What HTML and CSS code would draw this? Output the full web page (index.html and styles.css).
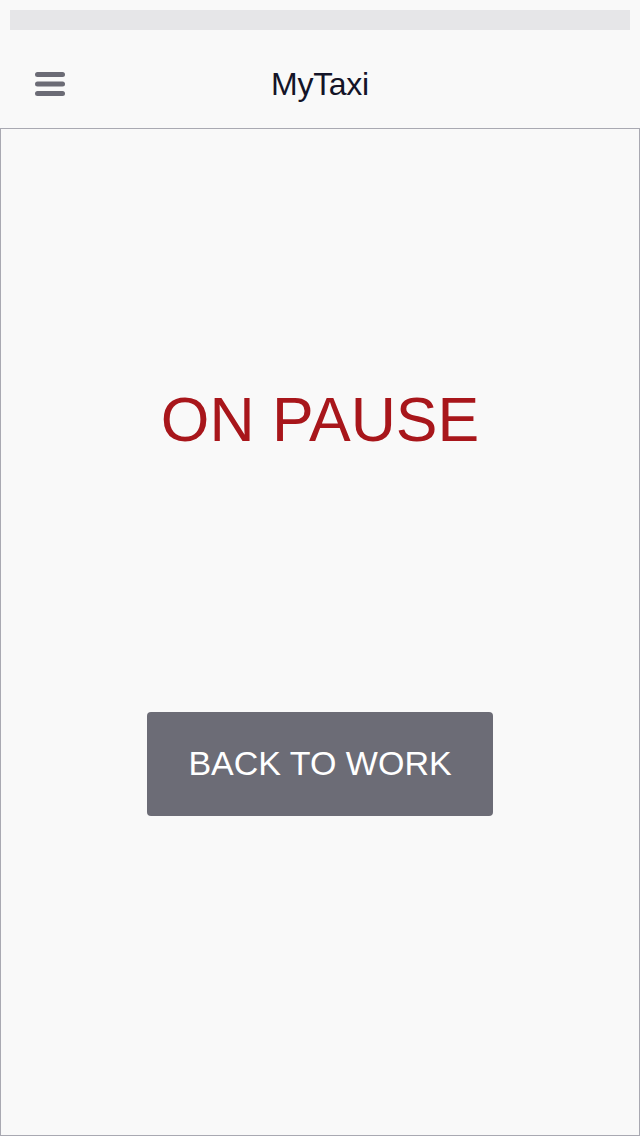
FILE: index.html
```html
<!DOCTYPE html>
<html>
<head>
<meta charset="utf-8">
<link rel="stylesheet" href="styles.css">
</head>
<body>
<div class="status"></div>
<header class="header">
  <button class="menu" aria-label="Menu">
    <svg width="30" height="24" viewBox="0 0 30 24">
      <rect x="0" y="0" width="30" height="5" rx="2.5" fill="#6b6b75"/>
      <rect x="0" y="9.5" width="30" height="5" rx="2.5" fill="#6b6b75"/>
      <rect x="0" y="19" width="30" height="5" rx="2.5" fill="#6b6b75"/>
    </svg>
  </button>
  <h1 class="title">MyTaxi</h1>
</header>
<main class="content">
  <div class="state">ON PAUSE</div>
  <button class="action">BACK TO WORK</button>
</main>
</body>
</html>
```
FILE: styles.css
```css
html, body {
  margin: 0;
  padding: 0;
  background: #f9f9f9;
  font-family: "Liberation Sans", Arial, sans-serif;
}
.status {
  margin: 10px 10px 0 10px;
  height: 20px;
  background: #e6e6e8;
}
.header {
  position: relative;
  height: 98px;
  display: flex;
  align-items: center;
  justify-content: center;
}
.menu {
  position: absolute;
  left: 35px;
  top: 42px;
  padding: 0;
  border: 0;
  background: none;
  width: 30px;
  height: 24px;
  display: block;
}
.menu svg { display: block; }
.title {
  margin: 0;
  font-weight: normal;
  font-size: 32px;
  letter-spacing: -0.3px;
  color: #141428;
  padding-top: 10px;
}
.content {
  box-sizing: border-box;
  height: 1008px;
  border: 1px solid #a9a9b2;
  display: flex;
  flex-direction: column;
  align-items: center;
}
.state {
  margin-top: 259px;
  font-size: 62.5px;
  line-height: 62px;
  color: #a8161b;
}
.action {
  margin-top: 262px;
  width: 346px;
  height: 104px;
  border: 0;
  border-radius: 4px;
  background: #6c6c76;
  color: #ffffff;
  font-family: "Liberation Sans", Arial, sans-serif;
  font-size: 34px;
  padding: 0 0 2px 0;
}
```
